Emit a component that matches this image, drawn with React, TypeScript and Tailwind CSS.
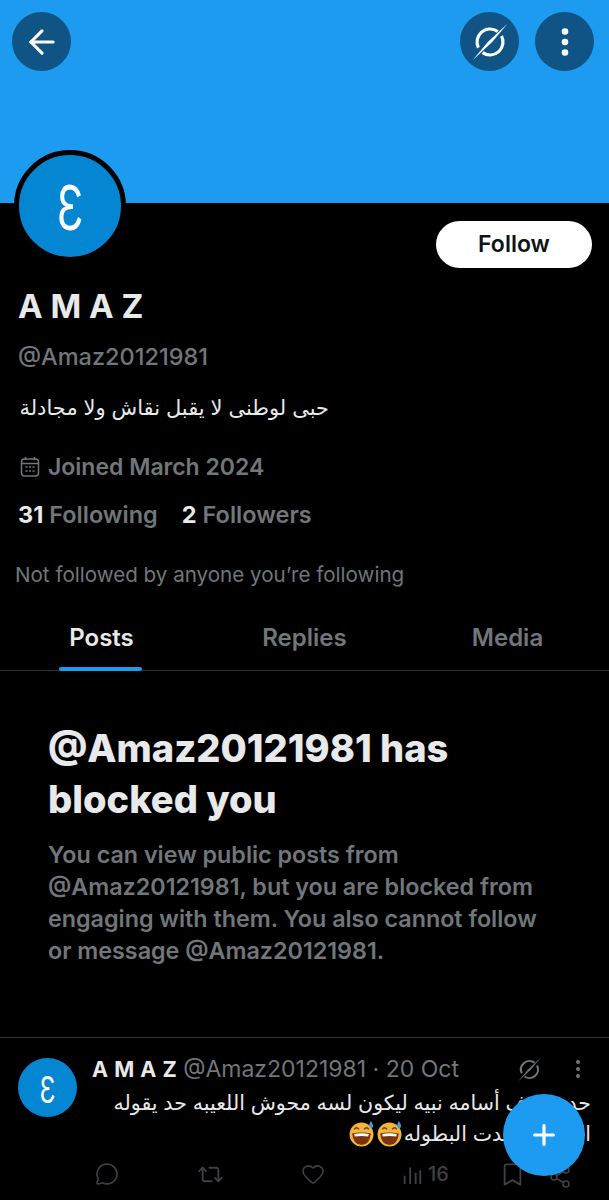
import React from "react";
import { ArrowLeft, MoreVertical, Plus, MessageCircle, Repeat2, Heart, Bookmark, Share2 } from "lucide-react";

const font = "font-['Inter','DejaVu_Sans',sans-serif]";

function MuteIcon({ className }: { className?: string }) {
  return (
    <svg viewBox="0 0 24 24" className={className} fill="none" stroke="currentColor">
      <circle cx="12" cy="12" r="8.2" strokeWidth="2" strokeDasharray="21.6 4.2" strokeDashoffset="23.7" transform="rotate(-42 12 12)" />
      <path d="M1 23.5 L10.6 12 L23 .5 L13.4 12Z" fill="currentColor" stroke="none" />
    </svg>
  );
}

function Epsilon({ size }: { size: string }) {
  return <span className={`inline-block scale-x-[0.66] font-['Open_Sans',sans-serif] font-normal leading-none text-white ${size}`}>Ɛ</span>;
}

function Emoji() {
  return (
    <svg viewBox="0 0 26 26" className="h-[27px] w-[27px]">
      <circle cx="13" cy="14" r="11.5" fill="#f5b53a" />
      <path d="M4 13 Q13 11 22 13 Q21 24 13 24 Q5 24 4 13Z" fill="#7a3410" />
      <path d="M6 13.5 Q13 12 20 13.5 L19.5 16 Q13 14.8 6.5 16Z" fill="#fff" />
      <path d="M6 9 Q8 6 10.5 9 M15.5 9 Q18 6 20 9" stroke="#6b3a10" strokeWidth="1.4" fill="none" />
      <path d="M22 1 Q26 6 22.5 8.5 Q18.5 6 22 1Z" fill="#3ba0dc" />
    </svg>
  );
}

export default function App() {
  return (
    <div className={`relative h-[1200px] w-[609px] overflow-hidden bg-black ${font}`}>
      <div className="flex h-[203px] items-start justify-between bg-[#1d9bf0] pl-[12px] pr-[15px] pt-[12px]">
        <div className="flex h-[59px] w-[59px] items-center justify-center rounded-full bg-[#0f5485] text-white">
          <ArrowLeft size={38} strokeWidth={2} />
        </div>
        <div className="flex gap-[16px]">
          <div className="flex h-[59px] w-[59px] items-center justify-center rounded-full bg-[#0f5485] text-white">
            <MuteIcon className="h-[38px] w-[38px]" />
          </div>
          <div className="flex h-[59px] w-[59px] items-center justify-center rounded-full bg-[#0f5485] text-white">
            <MoreVertical size={36} strokeWidth={2.4} />
          </div>
        </div>
      </div>

      <div className="flex items-start justify-between pl-[14px] pr-[17px]">
        <div className="mt-[-53px] flex h-[112px] w-[112px] items-center justify-center rounded-full border-[5px] border-black bg-[#0586d2]">
          <Epsilon size="text-[64px]" />
        </div>
        <div className="mt-[18px] flex h-[47px] w-[156px] items-center justify-center rounded-full bg-white text-[23px] font-semibold text-[#0f1419]">
          Follow
        </div>
      </div>

      <div className="mt-[16px] pl-[18px] text-[33px] font-bold leading-[44px] text-[#e7e9ea]">A M A Z</div>
      <div className="mt-[14px] pl-[18px] text-[23.5px] font-medium leading-[30px] text-[#71767b]">@Amaz20121981</div>
      <div dir="rtl" className="mt-[21px] w-[329px] whitespace-nowrap text-[21px] font-normal leading-[30px] text-[#e7e9ea]">
        حبى لوطنى لا يقبل نقاش ولا مجادلة
      </div>
      <div className="mt-[29px] flex items-center gap-[8px] pl-[20px] text-[23px] font-semibold leading-[30px] text-[#71767b]">
        <svg viewBox="0 0 20 22" className="h-[22px] w-[20px]" fill="none" stroke="currentColor" strokeWidth="1.5">
          <rect x="1.5" y="3" width="17" height="17" rx="3" />
          <path d="M5.5 1v3M14.5 1v3M1.5 7.5h17" />
          <path d="M5.5 11h2M9 11h2M12.5 11h2M5.5 15h2M9 15h2M12.5 15h2" strokeWidth="1.6" />
        </svg>
        <span>Joined March 2024</span>
      </div>
      <div className="mt-[18px] flex gap-[24px] pl-[18px] text-[23.5px] font-semibold leading-[30px] text-[#71767b]">
        <span><span className="font-bold text-[#e7e9ea]">31</span> Following</span>
        <span><span className="font-bold text-[#e7e9ea]">2</span> Followers</span>
      </div>
      <div className="mt-[30px] pl-[15px] text-[20.6px] leading-[30px] text-[#71767b]">Not followed by anyone you’re following</div>

      <div className="mt-[28px] flex h-[53px] border-b border-[#2f3336] text-[24px] font-semibold">
        <div className="relative flex w-[203px] items-start justify-center pt-[2px] text-[#e7e9ea]">
          <span>Posts</span>
          <div className="absolute bottom-[-1px] left-[59px] h-[4px] w-[83px] rounded-full bg-[#1d9bf0]"></div>
        </div>
        <div className="flex w-[203px] items-start justify-center pt-[2px] text-[#71767b]">Replies</div>
        <div className="flex w-[203px] items-start justify-center pt-[2px] text-[#71767b]">Media</div>
      </div>

      <div className="px-[48px] pt-[52px]">
        <div className="w-[420px] text-[38px] font-extrabold leading-[51px] text-[#e7e9ea]">@Amaz20121981 has blocked you</div>
        <div className="mt-[14px] w-[500px] text-[23.3px] font-semibold leading-[32px] text-[#71767b]">
          You can view public posts from @Amaz20121981, but you are blocked from engaging with them. You also cannot follow or message @Amaz20121981.
        </div>
      </div>

      <div className="mt-[70px] flex gap-[15px] border-t border-[#2f3336] pl-[18px] pt-[20px]">
        <div className="flex h-[59px] w-[59px] shrink-0 items-center justify-center rounded-full bg-[#0586d2]">
          <Epsilon size="text-[38px]" />
        </div>
        <div className="min-w-0 flex-1 pr-[18px]">
          <div className="flex h-[22px] items-center whitespace-nowrap text-[23px] leading-[22px] text-[#71767b]">
            <span className="text-[21.5px] font-bold tracking-[0.5px] text-[#e7e9ea]">A M A Z</span>
            <span className="ml-[6px]">@Amaz20121981 · 20 Oct</span>
            <MuteIcon className="ml-[58px] h-[25px] w-[25px] shrink-0 text-[#71767b]" />
            <MoreVertical size={24} className="ml-[24px] shrink-0" />
          </div>
          <div dir="rtl" className="mt-[7px] w-[499px] text-[20.6px] font-normal leading-[31px] text-[#e7e9ea]">
            <div className="whitespace-nowrap">حد يشوف أسامه نبيه ليكون لسه محوش اللعيبه حد يقوله</div>
            <div className="flex items-center gap-[1px] whitespace-nowrap">
              <span>الى قد شهدت البطوله</span>
              <Emoji />
              <Emoji />
            </div>
          </div>
          <div className="mt-[10px] flex items-center text-[#3d4146]">
            <MessageCircle size={24} strokeWidth={1.6} className="ml-[3px]" />
            <Repeat2 size={27} strokeWidth={1.6} className="ml-[78px]" />
            <Heart size={24} strokeWidth={1.6} className="ml-[77px]" />
            <svg viewBox="0 0 24 24" className="ml-[76px] h-[24px] w-[22px]" stroke="currentColor" strokeWidth="2">
              <path d="M4 23V14M10 23V5M16 23V11M21 23V8" />
            </svg>
            <span className="ml-[5px] text-[20px] font-medium">16</span>
            <Bookmark size={27} strokeWidth={1.6} className="ml-[50px]" />
            <Share2 size={24} strokeWidth={1.6} className="ml-[22px] mt-[6px]" />
          </div>
        </div>
      </div>

      <div className="absolute left-[503px] top-[1094px] flex h-[82px] w-[82px] items-center justify-center rounded-full bg-[#1d9bf0] text-white">
        <Plus size={32} strokeWidth={2.4} />
      </div>
    </div>
  );
}
